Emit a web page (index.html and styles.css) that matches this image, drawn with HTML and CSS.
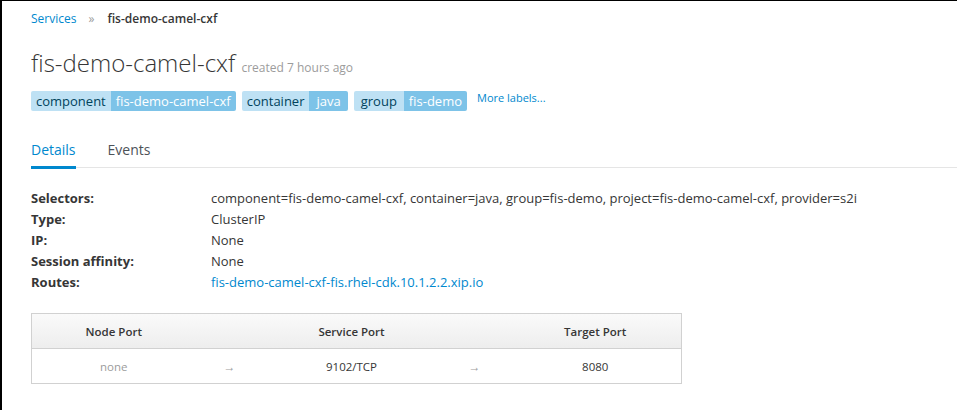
FILE: index.html
```html
<!DOCTYPE html>
<html>
<head>
<meta charset="utf-8">
<link rel="stylesheet" href="styles.css">
</head>
<body>
<div class="page">
  <ol class="breadcrumb">
    <li><a href="#" class="link">Services</a></li>
    <li class="sep">»</li>
    <li class="current">fis-demo-camel-cxf</li>
  </ol>
  <h1 class="title">fis-demo-camel-cxf <small class="meta">created 7 hours ago</small></h1>
  <div class="labels">
    <span class="label"><span class="key">component</span><span class="val">fis-demo-camel-cxf</span></span>
    <span class="label"><span class="key">container</span><span class="val wide">java</span></span>
    <span class="label"><span class="key wide">group</span><span class="val">fis-demo</span></span>
    <a href="#" class="more">More labels...</a>
  </div>
  <ul class="tabs">
    <li class="tab active">Details</li>
    <li class="tab">Events</li>
  </ul>
  <dl class="details">
    <dt>Selectors:</dt><dd>component=fis-demo-camel-cxf, container=java, group=fis-demo, project=fis-demo-camel-cxf, provider=s2i</dd>
    <dt>Type:</dt><dd>ClusterIP</dd>
    <dt>IP:</dt><dd>None</dd>
    <dt>Session affinity:</dt><dd>None</dd>
    <dt>Routes:</dt><dd><a href="#" class="link">fis-demo-camel-cxf-fis.rhel-cdk.10.1.2.2.xip.io</a></dd>
  </dl>
  <table class="ports">
    <colgroup>
      <col class="c-port1"><col class="c-arrow1"><col class="c-port2"><col class="c-arrow2"><col class="c-port3">
    </colgroup>
    <thead>
      <tr><th>Node Port</th><th></th><th>Service Port</th><th></th><th>Target Port</th></tr>
    </thead>
    <tbody>
      <tr><td class="muted">none</td><td class="arrow">→</td><td>9102/TCP</td><td class="arrow">→</td><td>8080</td></tr>
    </tbody>
  </table>
</div>
</body>
</html>
```

FILE: styles.css
```css
html, body {
  margin: 0;
  padding: 0;
  background: #fff;
}
body {
  font-family: "Open Sans", "Liberation Sans", sans-serif;
  color: #363636;
  border-top: 1px solid #000;
  border-left: 2px solid #000;
  min-height: 410px;
  box-sizing: border-box;
}
.page {
  padding-left: 29px;
}
.link {
  color: #0088ce;
  text-decoration: none;
}
.breadcrumb {
  list-style: none;
  margin: 0;
  padding: 9px 0 0;
  display: flex;
  font-size: 12px;
  line-height: 18px;
}
.breadcrumb .sep {
  color: #9c9c9c;
  margin: 0 13px 0 12px;
}
.breadcrumb .current {
  font-weight: 600;
  color: #363636;
}
.title {
  margin: 20px 0 0;
  font-size: 24px;
  line-height: 30px;
  font-weight: 300;
  color: #363636;
}
.meta {
  font-size: 12px;
  color: #9c9c9c;
  font-weight: 400;
}
.labels {
  margin-top: 8px;
  display: flex;
  align-items: flex-start;
  gap: 6px;
  height: 20px;
}
.label {
  display: flex;
  font-size: 13px;
  line-height: 20px;
  border-radius: 2px;
  overflow: hidden;
}
.key {
  background: #bee1f4;
  color: #00435c;
  padding: 0 5px;
}
.val {
  background: #7dc3e8;
  color: #fff;
  padding: 0 5px;
}
.key.wide, .val.wide {
  padding: 0 7px;
}
.more {
  color: #0088ce;
  font-size: 11px;
  line-height: 14px;
  text-decoration: none;
  margin-left: 4px;
}
.tabs {
  list-style: none;
  margin: 23px 0 0;
  padding: 0;
  display: flex;
  gap: 32px;
  border-bottom: 1px solid #e5e5e5;
}
.tab {
  position: relative;
  font-size: 14px;
  line-height: 20px;
  padding: 6px 0 7px;
  color: #4d5258;
}
.tab.active {
  color: #0088ce;
}
.tab.active::after {
  content: "";
  position: absolute;
  left: 0;
  right: 0;
  bottom: -2px;
  height: 3px;
  background: #0088ce;
}
.details {
  margin: 20px 0 0;
  display: grid;
  grid-template-columns: 180px 1fr;
  font-size: 13px;
  line-height: 21px;
}
.details dt {
  font-weight: 700;
  color: #363636;
}
.details dd {
  margin: 0;
  color: #363636;
}
.ports {
  margin-top: 20px;
  border-collapse: collapse;
  width: 650px;
  table-layout: fixed;
  font-size: 11.5px;
}
.c-port1 { width: 164px; }
.c-arrow1 { width: 68px; }
.c-port2 { width: 176px; }
.c-arrow2 { width: 70px; }
.c-port3 { width: 172px; }
.ports thead tr {
  background: linear-gradient(#fafafa, #ededed);
}
.ports th {
  height: 34px;
  padding: 0;
  font-weight: 600;
  color: #363636;
  text-align: center;
  border-top: 1px solid #d1d1d1;
  border-bottom: 1px solid #d1d1d1;
}
.ports th:first-child, .ports td:first-child { border-left: 1px solid #d1d1d1; }
.ports th:last-child, .ports td:last-child { border-right: 1px solid #d1d1d1; }
.ports td {
  height: 34px;
  padding: 0;
  text-align: center;
  color: #363636;
  border-bottom: 1px solid #d1d1d1;
}
.ports td.muted { color: #9c9c9c; }
.ports td.arrow { color: #9c9c9c; font-size: 12px; }
```
